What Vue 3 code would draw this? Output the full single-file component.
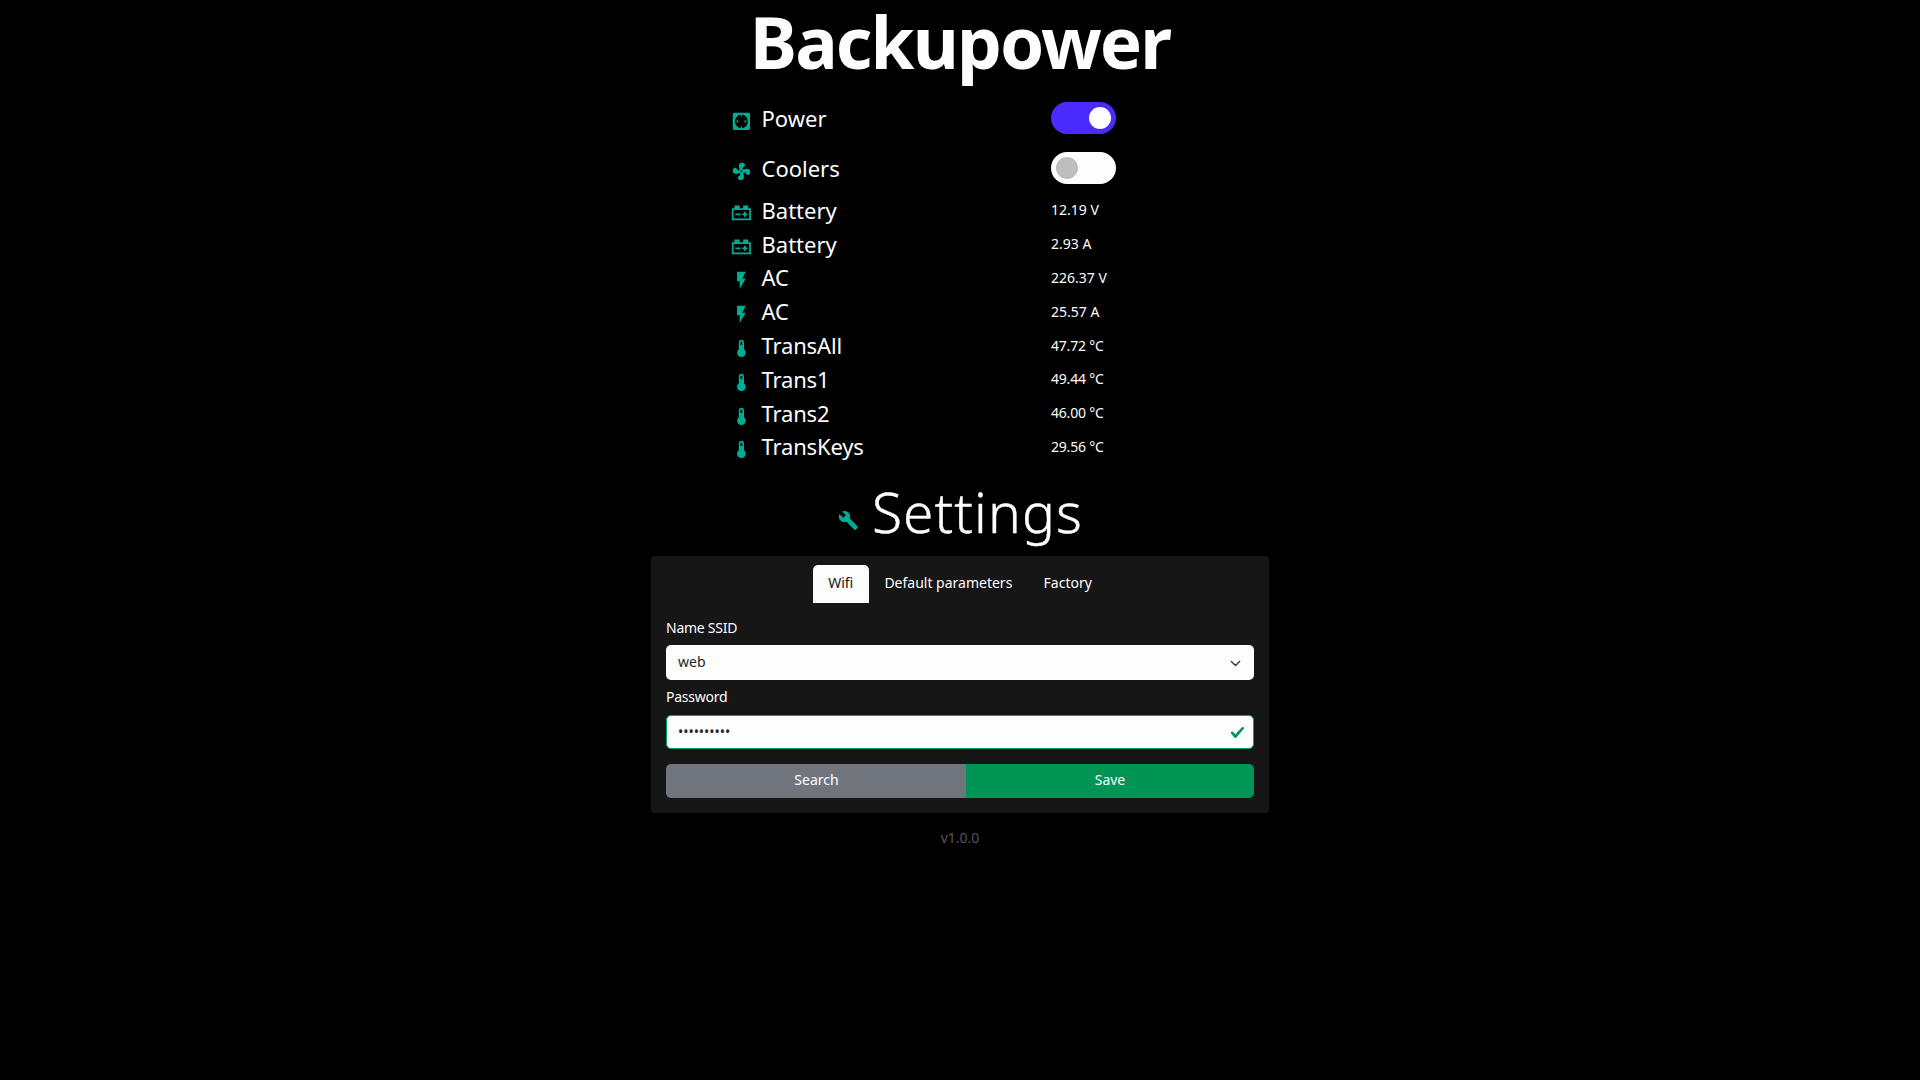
<script setup>
import { ref } from 'vue'

const icons = {
  socket: 'M4 2H20A2 2 0 0 1 22 4V20A2 2 0 0 1 20 22H4A2 2 0 0 1 2 20V4A2 2 0 0 1 4 2M11.3 4.1A8 8 0 0 0 11.3 19.9V17.8H12.7V19.9A8 8 0 0 0 12.7 4.1V6.2H11.3V4.1M7.4 10.8A1.2 1.2 0 1 1 7.4 13.2A1.2 1.2 0 0 1 7.4 10.8M16.6 10.8A1.2 1.2 0 1 1 16.6 13.2A1.2 1.2 0 0 1 16.6 10.8Z',
  fan: 'M12,11A1,1 0 0,0 11,12A1,1 0 0,0 12,13A1,1 0 0,0 13,12A1,1 0 0,0 12,11M12.5,2C17,2 17.11,5.57 14.75,6.75C13.76,7.24 13.32,8.29 13.13,9.22C13.61,9.42 14.03,9.73 14.35,10.13C18.05,8.13 22.03,8.92 22.03,12.5C22.03,17 18.46,17.1 17.28,14.73C16.78,13.74 15.72,13.3 14.79,13.11C14.59,13.59 14.28,14 13.88,14.34C15.87,18.03 15.08,22 11.5,22C7,22 6.91,18.42 9.27,17.24C10.25,16.75 10.69,15.71 10.89,14.79C10.4,14.59 9.97,14.27 9.65,13.87C5.96,15.85 2,15.07 2,11.5C2,7 5.56,6.89 6.74,9.26C7.24,10.25 8.29,10.68 9.22,10.87C9.41,10.39 9.73,9.97 10.14,9.65C8.15,5.96 8.94,2 12.5,2Z',
  battery: 'M4,3V6H1V20H23V6H20V3H14V6H10V3H4M3,8H21V18H3V8M15,10V12H13V14H15V16H17V14H19V12H17V10H15M5,12V14H11V12H5Z',
  flash: 'M7,2V13H10V22L17,10H13L17,2H7Z',
  thermometer: 'M15 13V5A3 3 0 0 0 9 5V13A5 5 0 1 0 15 13M12 4A1 1 0 0 1 13 5V8H11V5A1 1 0 0 1 12 4Z',
  wrench: 'M22.7,19L13.6,9.9C14.5,7.6 14,4.9 12.1,3C10.1,1 7.1,0.6 4.7,1.7L9,6L6,9L1.6,4.7C0.4,7.1 0.9,10.1 2.9,12.1C4.8,14 7.5,14.5 9.8,13.6L18.9,22.7C19.3,23.1 19.9,23.1 20.3,22.7L22.6,20.4C23.1,20 23.1,19.3 22.7,19Z'
}

const switches = ref([
  { label: 'Power', icon: 'socket', on: true },
  { label: 'Coolers', icon: 'fan', on: false }
])

const readings = [
  { label: 'Battery', icon: 'battery', value: '12.19 V' },
  { label: 'Battery', icon: 'battery', value: '2.93 A' },
  { label: 'AC', icon: 'flash', value: '226.37 V' },
  { label: 'AC', icon: 'flash', value: '25.57 A' },
  { label: 'TransAll', icon: 'thermometer', value: '47.72 °C' },
  { label: 'Trans1', icon: 'thermometer', value: '49.44 °C' },
  { label: 'Trans2', icon: 'thermometer', value: '46.00 °C' },
  { label: 'TransKeys', icon: 'thermometer', value: '29.56 °C' }
]

const tabs = ['Wifi', 'Default parameters', 'Factory']
const activeTab = ref('Wifi')
</script>

<template>
  <main class="page">
    <h1 class="title">Backupower</h1>

    <section class="status">
      <div v-for="s in switches" :key="s.label" class="row row-switch">
        <svg class="icon" viewBox="0 0 24 24"><path fill-rule="evenodd" :d="icons[s.icon]" /></svg>
        <span class="label">{{ s.label }}</span>
        <button class="toggle" :class="{ on: s.on }" @click="s.on = !s.on"><span class="knob"></span></button>
      </div>
      <div v-for="(r, i) in readings" :key="i" class="row">
        <svg class="icon" viewBox="0 0 24 24"><path fill-rule="evenodd" :d="icons[r.icon]" /></svg>
        <span class="label" :class="{ trans: r.icon === 'thermometer' }">{{ r.label }}</span>
        <span class="value" :class="{ temp: r.icon === 'thermometer' }">{{ r.value }}</span>
      </div>
    </section>

    <h2 class="heading">
      <svg class="icon wrench" viewBox="0 0 24 24"><path :d="icons.wrench" /></svg>
      <span>Settings</span>
    </h2>

    <section class="card">
      <nav class="tabs">
        <button v-for="t in tabs" :key="t" class="tab" :class="{ active: t === activeTab }" @click="activeTab = t">{{ t }}</button>
      </nav>
      <div class="field-label">Name SSID</div>
      <div class="control">
        <span>web</span>
        <svg class="chevron" viewBox="0 0 16 16"><path d="M2 5l6 6 6-6" /></svg>
      </div>
      <div class="field-label second">Password</div>
      <div class="control valid">
        <span class="dots">••••••••••</span>
        <svg class="check" viewBox="0 0 8 8"><path d="M2.3 6.73L.6 4.53c-.4-1.04.46-1.4 1.1-.8l1.1 1.4 3.4-3.8c.6-.63 1.6-.27 1.2.7l-4 4.6c-.43.5-.8.4-1.1.1z" /></svg>
      </div>
      <div class="actions">
        <button class="search">Search</button>
        <button class="save">Save</button>
      </div>
    </section>

    <footer class="version">v1.0.0</footer>
  </main>
</template>

<style>
body { background: #000; }
</style>

<style scoped>
.page {
  box-sizing: border-box;
  display: flex;
  flex-direction: column;
  align-items: center;
  min-height: 1080px;
  background: #000;
  color: #fdfdfe;
  font: 14px/20px "Noto Sans", sans-serif;
}
button {
  border: 0;
  padding: 0;
  font: inherit;
  color: inherit;
  background: none;
}
.title {
  margin: 0 0 11px;
  font-size: 71px;
  line-height: 83px;
  font-weight: 700;
  letter-spacing: -1.9px;
}
.status { width: 458px; }
.row {
  display: grid;
  grid-template-columns: 31px 289px 1fr;
  align-items: center;
  height: 33.8px;
}
.row-switch { height: 50px; }
.icon {
  width: 20.8px;
  height: 20.8px;
  margin-top: 4.5px;
  fill: #00ad93;
}
.label {
  margin: -2px 0 0 -0.5px;
  font-size: 22px;
  line-height: 30px;
}
.trans { letter-spacing: -0.15px; }
.value { margin-top: -1px; }
.temp { letter-spacing: -0.2px; }
.toggle {
  display: flex;
  align-items: center;
  box-sizing: border-box;
  width: 65px;
  height: 32px;
  padding: 0 5px;
  margin-top: -2px;
  border-radius: 16px;
  background: #fdfdfe;
}
.toggle.on {
  justify-content: flex-end;
  background: #4a2bfc;
}
.knob {
  width: 22px;
  height: 22px;
  border-radius: 50%;
  background: #bfbebe;
}
.on .knob { background: #fdfdfe; }
.heading {
  display: flex;
  align-items: center;
  gap: 13px;
  height: 84px;
  margin: 7.6px 0 0;
  padding-left: 1px;
  font-size: 55px;
  line-height: 80px;
  font-weight: 300;
  letter-spacing: 1.1px;
  -webkit-text-stroke: 0.4px #fdfdfe;
}
.heading span { margin-top: -3px; }
.wrench { margin-top: 12px; }
.card {
  box-sizing: border-box;
  width: 618px;
  height: 257px;
  padding: 9px 15px 15px;
  border-radius: 4px;
  background: #161617;
}
.tabs {
  display: flex;
  justify-content: center;
  height: 38px;
}
.tab {
  padding: 0 15.6px 2px;
  border-radius: 5px 5px 0 0;
}
.tab.active {
  background: #fdfdfe;
  color: #161617;
}
.field-label {
  height: 42px;
  line-height: 49px;
  letter-spacing: -0.25px;
}
.field-label.second {
  height: 35px;
  line-height: 33px;
}
.control {
  box-sizing: border-box;
  display: flex;
  align-items: center;
  justify-content: space-between;
  height: 35px;
  padding: 0 13px 0 12px;
  border-radius: 5px;
  background: #fdfdfe;
  color: #212529;
}
.control.valid {
  height: 34px;
  padding: 0 8px 0 11px;
  border: 1px solid #00a85a;
}
.chevron {
  width: 11px;
  height: 11px;
  margin-top: 2px;
  fill: none;
  stroke: #343a40;
  stroke-width: 2;
  stroke-linecap: round;
  stroke-linejoin: round;
}
.check {
  width: 15px;
  height: 15px;
  margin-top: 1px;
  fill: #009455;
}
.dots { letter-spacing: -0.05px; }
.actions {
  display: flex;
  height: 34px;
  margin-top: 15px;
  border-radius: 5px;
  overflow: hidden;
}
.search {
  width: 300px;
  padding: 0 0 2px 1px;
  background: #70757d;
}
.save {
  flex: 1;
  padding-bottom: 2px;
  background: #009455;
}
.version {
  margin-top: 14.6px;
  color: #55565a;
}
</style>
